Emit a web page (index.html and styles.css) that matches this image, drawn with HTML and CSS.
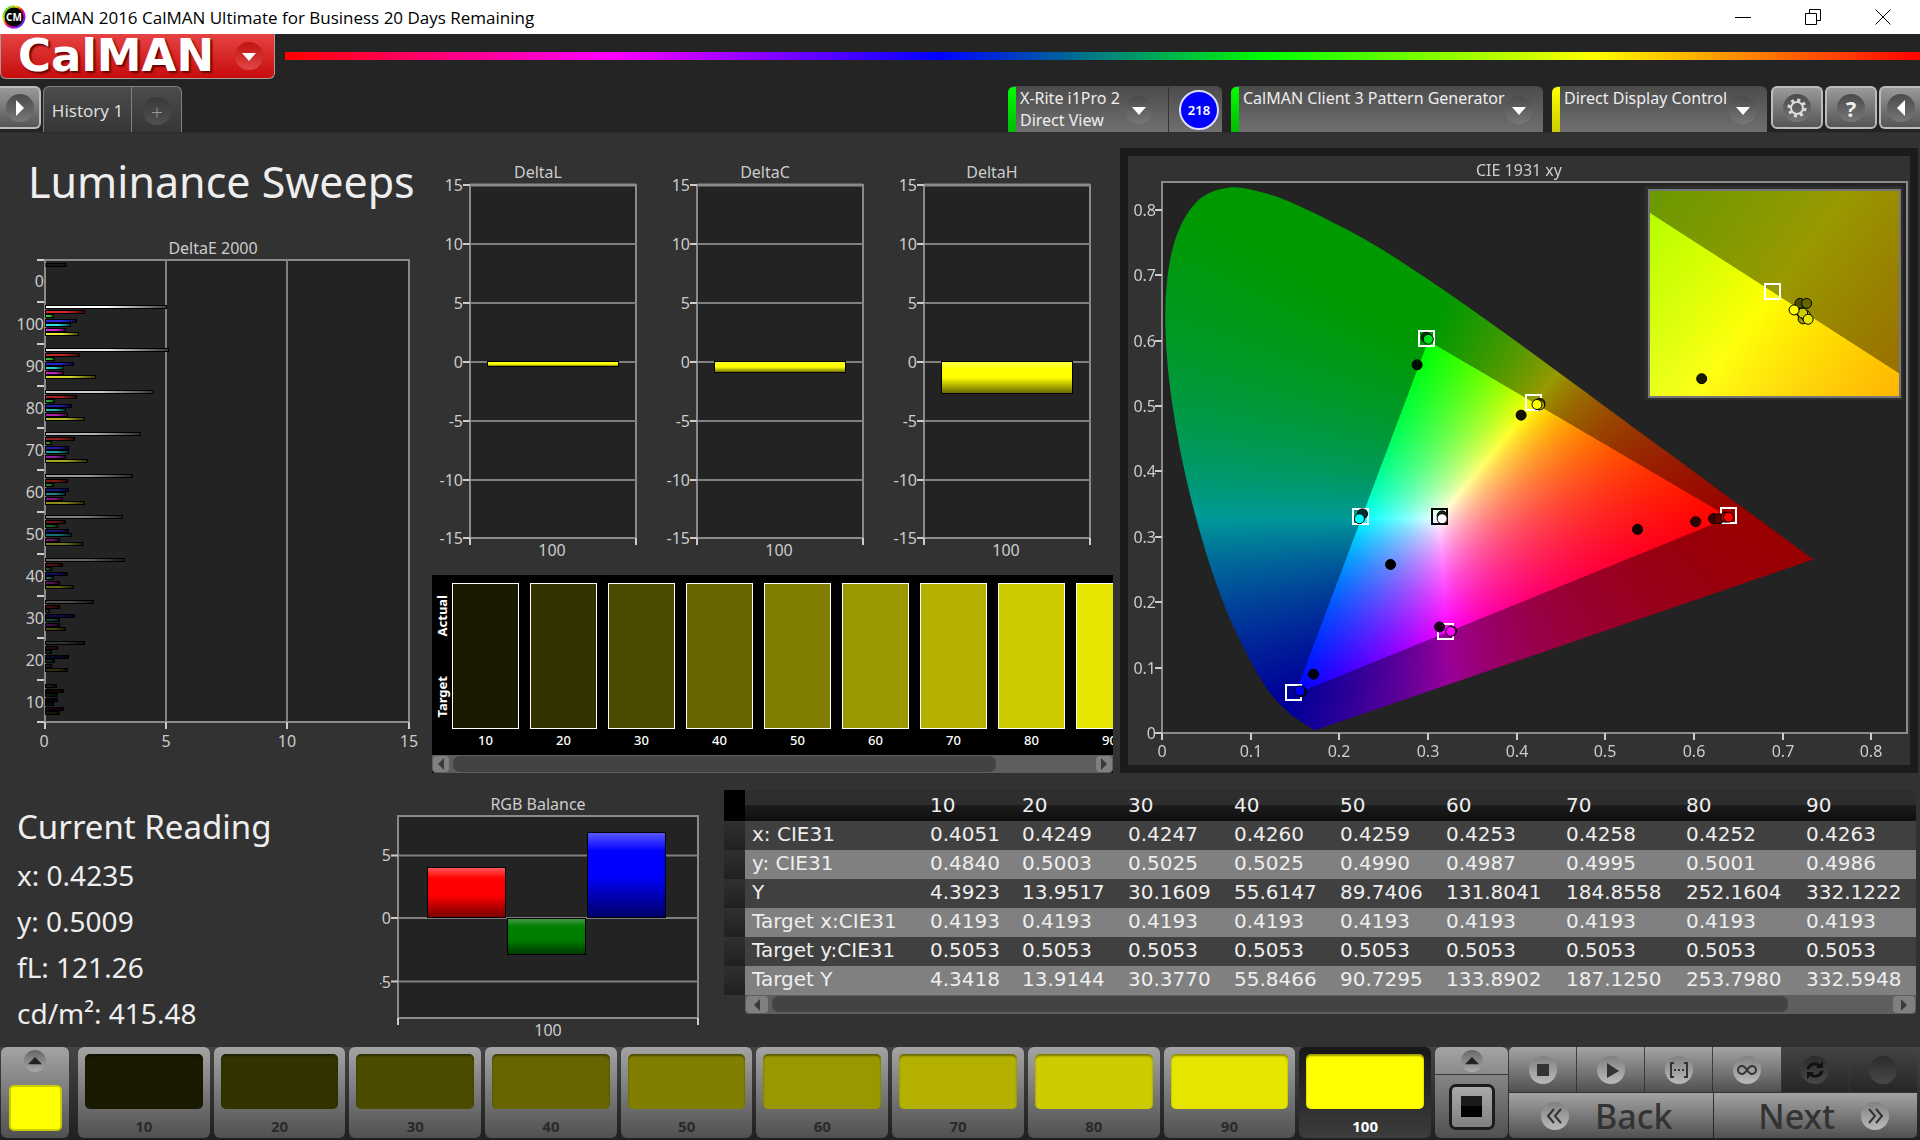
FILE: index.html
```html
<!DOCTYPE html>
<html lang="en">
<head>
<meta charset="utf-8">
<title>CalMAN 2016 CalMAN Ultimate for Business 20 Days Remaining</title>
<link rel="stylesheet" href="styles.css">
</head>
<body>
<div class="titlebar">
  <svg class="app-icon" viewBox="0 0 24 24" aria-hidden="true">
    <defs><linearGradient id="ring" x1="0" y1="0" x2="1" y2="1"><stop offset="0" stop-color="#0c4"/><stop offset=".3" stop-color="#dd0"/><stop offset=".5" stop-color="#e22"/><stop offset=".7" stop-color="#c0e"/><stop offset="1" stop-color="#04f"/></linearGradient></defs>
    <circle cx="12" cy="12" r="10.5" fill="#000" stroke="url(#ring)" stroke-width="2"/>
    <text x="12" y="16" class="app-icon-text">CM</text>
  </svg>
  <span class="window-title">CalMAN 2016 CalMAN Ultimate for Business 20 Days Remaining</span>
  <div class="window-buttons">
    <button type="button" aria-label="Minimize"><svg viewBox="0 0 16 16"><path d="M0 8.5h16"/></svg></button>
    <button type="button" aria-label="Restore"><svg viewBox="0 0 16 16"><path d="M.5 4.500h11v11h-11zM4.500 4.500v-4h11v11h-4"/></svg></button>
    <button type="button" aria-label="Close"><svg viewBox="0 0 16 16"><path d="M.5.5l15 15M15.500.5l-15 15"/></svg></button>
  </div>
</div>

<header class="header">
  <div class="brand-row">
    <button type="button" class="brand"><span>CalMAN</span><span class="knob knob-red"><svg viewBox="0 0 28 28"><path d="M7 11h14l-7 8z" fill="#fff"/></svg></span></button>
    <div class="spectrum"></div>
  </div>
  <div class="tab-row">
    <button type="button" class="side-button side-left" aria-label="Show workflow"><span class="knob"><svg viewBox="0 0 28 28"><path d="M10 6l8 8-8 8z" fill="#fff"/></svg></span></button>
    <div class="tabs">
      <button type="button" class="tab">History 1</button>
      <button type="button" class="tab-add" aria-label="Add history"><span class="knob knob-dark"><svg viewBox="0 0 28 28"><path d="M9 15.500h10M14 10.500v10" stroke="#999" fill="none"/></svg></span></button>
    </div>
    <div class="devices">
      <div class="device meter">
        <button type="button" class="device-main"><i class="status green"></i><span>X-Rite i1Pro 2<br>Direct View</span><span class="knob"><svg viewBox="0 0 28 28"><path d="M7 11h14l-7 8z" fill="#fff"/></svg></span></button>
        <span class="reading-count">218</span>
      </div>
      <button type="button" class="device device-main source"><i class="status green"></i><span>CalMAN Client 3 Pattern Generator</span><span class="knob"><svg viewBox="0 0 28 28"><path d="M7 11h14l-7 8z" fill="#fff"/></svg></span></button>
      <button type="button" class="device device-main display"><i class="status yellow"></i><span>Direct Display Control</span><span class="knob"><svg viewBox="0 0 28 28"><path d="M7 11h14l-7 8z" fill="#fff"/></svg></span></button>
      <div class="tools">
        <button type="button" class="tool" aria-label="Settings"><span class="knob"><svg viewBox="0 0 28 28"><circle cx="14" cy="14" r="6" fill="none" stroke="#ddd" stroke-width="2"/><circle cx="14" cy="14" r="8" fill="none" stroke="#ddd" stroke-width="3" stroke-dasharray="3 3.280"/></svg></span></button>
        <button type="button" class="tool" aria-label="Help"><span class="knob knob-text">?</span></button>
        <button type="button" class="side-button side-right" aria-label="Show panel"><span class="knob"><svg viewBox="0 0 28 28"><path d="M18 6l-8 8 8 8z" fill="#fff"/></svg></span></button>
      </div>
    </div>
  </div>
</header>

<main class="workspace">
  <section class="top">
    <div class="sweep">
      <h1>Luminance Sweeps</h1>
      <svg id="delta-e" class="chart" viewBox="0 230 420 530" role="img" aria-label="DeltaE 2000"></svg>
    </div>

    <div class="middle">
      <div class="deltas">
        <svg class="chart delta" viewBox="0 0 227 442" data-title="DeltaL" data-bottom="233"></svg>
        <svg class="chart delta" viewBox="0 0 227 442" data-title="DeltaC" data-bottom="239"></svg>
        <svg class="chart delta" viewBox="0 0 227 442" data-title="DeltaH" data-bottom="260"></svg>
      </div>
      <div class="compare">
        <div class="compare-body">
          <div class="compare-labels"><span>Actual</span><span>Target</span></div>
          <div class="compare-strip">
            <div class="patch"><i class="patch-10"></i>10</div>
            <div class="patch"><i class="patch-20"></i>20</div>
            <div class="patch"><i class="patch-30"></i>30</div>
            <div class="patch"><i class="patch-40"></i>40</div>
            <div class="patch"><i class="patch-50"></i>50</div>
            <div class="patch"><i class="patch-60"></i>60</div>
            <div class="patch"><i class="patch-70"></i>70</div>
            <div class="patch"><i class="patch-80"></i>80</div>
            <div class="patch"><i class="patch-90"></i>90</div>
          </div>
        </div>
        <div class="scrollbar">
          <button type="button" aria-label="Scroll left"><svg viewBox="0 0 10 14"><path d="M8 1v12L2 7z"/></svg></button>
          <div class="track"><div class="thumb thumb-compare"></div></div>
          <button type="button" aria-label="Scroll right"><svg viewBox="0 0 10 14"><path d="M2 1v12l6-6z"/></svg></button>
        </div>
      </div>
    </div>

    <div class="cie">
      <canvas id="cie-canvas" width="782" height="609"></canvas>
      <svg id="cie-overlay" class="chart" viewBox="1128 156 782 609" role="img" aria-label="CIE 1931 xy"></svg>
    </div>
  </section>

  <section class="bottom">
    <div class="reading">
      <h2>Current Reading</h2>
      <p>x: 0.4235</p>
      <p>y: 0.5009</p>
      <p>fL: 121.26</p>
      <p>cd/m²: 415.48</p>
    </div>

    <svg class="chart" viewBox="380 775 344 268" role="img" aria-label="RGB Balance">
      <defs>
        <linearGradient id="red-bar" x1="0" y1="0" x2="0" y2="1"><stop offset="0" stop-color="#ff5a5a"/><stop offset=".22" stop-color="#f00"/><stop offset=".55" stop-color="#f00"/><stop offset="1" stop-color="#700"/></linearGradient>
        <linearGradient id="green-bar" x1="0" y1="0" x2="0" y2="1"><stop offset="0" stop-color="#4a9a4a"/><stop offset=".22" stop-color="#008000"/><stop offset=".6" stop-color="#007c00"/><stop offset="1" stop-color="#003800"/></linearGradient>
        <linearGradient id="blue-bar" x1="0" y1="0" x2="0" y2="1"><stop offset="0" stop-color="#5a5aff"/><stop offset=".22" stop-color="#00f"/><stop offset=".5" stop-color="#00f"/><stop offset="1" stop-color="#006"/></linearGradient>
      </defs>
      <text x="538" y="810" class="mid">RGB Balance</text>
      <rect x="398" y="816" width="300" height="202" class="plot"/>
      <path class="grid" d="M398 855.500h300M398 918h300M398 981.500h300"/>
      <path class="tick" d="M391 855.500h7M391 918h7M391 981.500h7M398 1018v7M698 1018v7"/>
      <text x="391" y="861" class="end">5</text><text x="391" y="924" class="end">0</text><text x="391" y="988" class="end">-5</text>
      <rect x="427.500" y="867.500" width="78" height="50" fill="url(#red-bar)" stroke="#000"/>
      <rect x="507.500" y="918.500" width="78" height="36" fill="url(#green-bar)" stroke="#000"/>
      <rect x="587.500" y="832.500" width="78" height="85" fill="url(#blue-bar)" stroke="#000"/>
      <text x="548" y="1036" class="mid">100</text>
    </svg>

    <div class="data">
      <table>
        <colgroup><col class="c-mark"><col class="c-name"><col class="c-first"><col class="c-two"><col class="c-two"><col class="c-two"><col class="c-two"><col class="c-three"><col class="c-three"><col class="c-three"><col class="c-last"></colgroup>
        <thead><tr><td class="mark"></td><td></td><th>10</th><th>20</th><th>30</th><th>40</th><th>50</th><th>60</th><th>70</th><th>80</th><th>90</th></tr></thead>
        <tbody>
          <tr><td class="mark"></td><th>x: CIE31</th><td>0.4051</td><td>0.4249</td><td>0.4247</td><td>0.4260</td><td>0.4259</td><td>0.4253</td><td>0.4258</td><td>0.4252</td><td>0.4263</td></tr>
          <tr><td class="mark"></td><th>y: CIE31</th><td>0.4840</td><td>0.5003</td><td>0.5025</td><td>0.5025</td><td>0.4990</td><td>0.4987</td><td>0.4995</td><td>0.5001</td><td>0.4986</td></tr>
          <tr><td class="mark"></td><th>Y</th><td>4.3923</td><td>13.9517</td><td>30.1609</td><td>55.6147</td><td>89.7406</td><td>131.8041</td><td>184.8558</td><td>252.1604</td><td>332.1222</td></tr>
          <tr><td class="mark"></td><th>Target x:CIE31</th><td>0.4193</td><td>0.4193</td><td>0.4193</td><td>0.4193</td><td>0.4193</td><td>0.4193</td><td>0.4193</td><td>0.4193</td><td>0.4193</td></tr>
          <tr><td class="mark"></td><th>Target y:CIE31</th><td>0.5053</td><td>0.5053</td><td>0.5053</td><td>0.5053</td><td>0.5053</td><td>0.5053</td><td>0.5053</td><td>0.5053</td><td>0.5053</td></tr>
          <tr><td class="mark"></td><th>Target Y</th><td>4.3418</td><td>13.9144</td><td>30.3770</td><td>55.8466</td><td>90.7295</td><td>133.8902</td><td>187.1250</td><td>253.7980</td><td>332.5948</td></tr>
        </tbody>
      </table>
      <div class="scrollbar scrollbar-data">
        <button type="button" aria-label="Scroll left"><svg viewBox="0 0 10 14"><path d="M8 1v12L2 7z"/></svg></button>
        <div class="track"><div class="thumb thumb-data"></div></div>
        <button type="button" aria-label="Scroll right"><svg viewBox="0 0 10 14"><path d="M2 1v12l6-6z"/></svg></button>
      </div>
    </div>
  </section>
</main>

<footer class="footer">
  <button type="button" class="current-patch" aria-label="Current pattern"><span class="knob knob-small"><svg viewBox="0 0 28 28"><path d="M5 18h18l-9-9z" fill="#222"/></svg></span><i class="patch-100"></i></button>
  <div class="levels">
    <button type="button" class="level"><i class="patch-10"></i>10</button>
    <button type="button" class="level"><i class="patch-20"></i>20</button>
    <button type="button" class="level"><i class="patch-30"></i>30</button>
    <button type="button" class="level"><i class="patch-40"></i>40</button>
    <button type="button" class="level"><i class="patch-50"></i>50</button>
    <button type="button" class="level"><i class="patch-60"></i>60</button>
    <button type="button" class="level"><i class="patch-70"></i>70</button>
    <button type="button" class="level"><i class="patch-80"></i>80</button>
    <button type="button" class="level"><i class="patch-90"></i>90</button>
    <button type="button" class="level selected"><i class="patch-100"></i>100</button>
  </div>
  <div class="window-size">
    <button type="button" aria-label="Pattern options"><span class="knob knob-small"><svg viewBox="0 0 28 28"><path d="M5 18h18l-9-9z" fill="#222"/></svg></span></button>
    <button type="button" class="window-pattern" aria-label="Window pattern"><span><i></i></span></button>
  </div>
  <div class="controls">
    <div class="transport">
      <button type="button" aria-label="Stop"><span class="knob knob-light"><svg viewBox="0 0 28 28"><path d="M8 8h12v12H8z" fill="#333"/></svg></span></button>
      <button type="button" aria-label="Read single"><span class="knob knob-light"><svg viewBox="0 0 28 28"><path d="M10 7l12 8-12 7z" fill="#333"/></svg></span></button>
      <button type="button" aria-label="Read series"><span class="knob knob-light"><svg viewBox="0 0 28 28"><path d="M9 7H6v14h3M19 7h3v14h-3M9 14h2M13 14h2M17 14h2" fill="none" stroke="#333" stroke-width="2"/></svg></span></button>
      <button type="button" aria-label="Read continuous"><span class="knob knob-light"><svg viewBox="0 0 28 28"><path d="M14 14c-2-3-3-4-5-4a4 4 0 0 0 0 8c2 0 3-1 5-4s3-4 5-4a4 4 0 0 1 0 8c-2 0-3-1-5-4z" fill="none" stroke="#333" stroke-width="2"/></svg></span></button>
      <button type="button" class="off" aria-label="Auto advance"><span class="knob knob-off"><svg viewBox="0 0 28 28"><path d="M7 13c1-5 8-7 12-3M21 15c-1 5-8 7-12 3" fill="none" stroke="#111" stroke-width="3"/><path d="M15 12h7V5zM13 16H6v7z" fill="#111"/></svg></span></button>
      <button type="button" class="off" aria-label="Record"><span class="knob knob-off"></span></button>
    </div>
    <div class="pager">
      <button type="button" class="back"><span class="knob knob-light"><svg viewBox="0 0 28 28"><path d="M13 7l-6 7 6 7M20 7l-6 7 6 7" fill="none" stroke="#333" stroke-width="2"/></svg></span>Back</button>
      <button type="button" class="next">Next<span class="knob knob-light"><svg viewBox="0 0 28 28"><path d="M8 7l6 7-6 7M15 7l6 7-6 7" fill="none" stroke="#333" stroke-width="2"/></svg></span></button>
    </div>
  </div>
</footer>
<script src="charts.js"></script>
</body>
</html>
```
FILE: styles.css
```css
* { box-sizing: border-box; }

body {
  margin: 0;
  min-height: 100vh;
  display: flex;
  flex-direction: column;
  background: #242424;
  color: #eee;
  font-family: "Noto Sans", "Open Sans", sans-serif;
  font-size: 16px;
  overflow-x: hidden;
}

button {
  border: 0;
  padding: 0;
  background: none;
  color: inherit;
  font: inherit;
  display: flex;
  align-items: center;
  justify-content: center;
}

svg { display: block; }
h1, h2, p { margin: 0; font-weight: 400; }

/* Window title bar */
.titlebar {
  height: 34px;
  background: #fff;
  color: #000;
  display: flex;
  align-items: center;
  padding-left: 2px;
}
.app-icon { width: 24px; height: 24px; }
.app-icon-text { font-size: 10px; font-weight: 700; fill: #fff; text-anchor: middle; }
.window-title { flex: 1; padding-left: 5px; font-family: "Open Sans", sans-serif; font-size: 17px; }
.window-buttons { display: flex; padding-right: 2px; }
.window-buttons button { width: 70px; height: 34px; }
.window-buttons svg { width: 16px; height: 16px; fill: none; stroke: #000; }

/* Header */
.header { background: #242424; }
.brand-row { display: flex; gap: 10px; height: 52px; }
.brand {
  width: 275px;
  height: 45px;
  padding: 0 11px 0 17px;
  justify-content: space-between;
  border: 1px solid #a99;
  border-top: 0;
  border-radius: 0 0 6px 6px;
  background: linear-gradient(#e64343, #c80c0c);
  color: #fff;
  font-family: "DejaVu Sans", sans-serif;
  font-weight: 700;
  font-size: 45px;
  line-height: 44px;
  text-shadow: 2px 2px 2px #600;
}
.spectrum {
  flex: 1;
  height: 8px;
  margin-top: 18px;
  background: linear-gradient(90deg, #f00, #f0f, #00f, #0f0, #ff0, #f00);
}

.knob {
  flex: none;
  width: 28px;
  height: 28px;
  border-radius: 50%;
  background: linear-gradient(#4a4a4a, #777);
}
.knob-red { background: linear-gradient(#c01010, #e04848); }
.knob-dark { background: linear-gradient(#383838, #505050); }
.knob-small { width: 22px; height: 22px; background: linear-gradient(#666, #aaa); }
.knob-light { background: linear-gradient(#808080, #bbb); }
.knob-off { background: linear-gradient(#2c2c2c, #484848); }
.knob-text { color: #eee; font-weight: 700; font-size: 22px; line-height: 28px; text-align: center; }

.tab-row { display: flex; height: 46px; align-items: flex-start; }
.side-button, .tool {
  width: 52px;
  height: 43px;
  border: 2px solid #bbb;
  border-radius: 6px;
  background: linear-gradient(#9a9a9a, #555);
}
.side-left { width: 41px; border-left: 0; border-radius: 0 6px 6px 0; }
.side-right { width: 41px; border-right: 0; border-radius: 6px 0 0 6px; }
.tabs {
  display: flex;
  height: 46px;
  margin-left: 2px;
  border: 1px solid #808080;
  border-bottom: 0;
  border-radius: 6px 6px 0 0;
  background: linear-gradient(#4c4c4c, #363636);
}
.tab { width: 88px; border-right: 1px solid #808080; color: #ddd; font-size: 17px; padding-top: 2px; }
.tab-add { width: 49px; padding-top: 3px; }

.devices { display: flex; margin-left: auto; gap: 9px; }
.device {
  height: 46px;
  border-top: 1px solid #4a4a4a;
  border-radius: 6px 6px 0 0;
  background: linear-gradient(#4c4c4c, #707070);
  overflow: hidden;
}
.meter { display: flex; width: 214px; align-items: center; }
.device-main {
  justify-content: flex-start;
  align-items: stretch;
  text-align: left;
  font-size: 16px;
  line-height: 22px;
}
.device-main > span:nth-child(2) { flex: 1; white-space: nowrap; padding-left: 4px; }
.device-main .knob { align-self: center; margin-right: 10px; }
.meter .device-main { width: 161px; height: 45px; border-right: 1px solid #333; }
.meter .device-main .knob { margin-right: 15px; }
.status { width: 8px; flex: none; border-radius: 5px 0 0 0; }
.green { background: linear-gradient(#0f0, #0b0); }
.yellow { background: linear-gradient(#ff0, #cc0); }
.source { width: 312px; }
.display { width: 215px; }
.reading-count {
  width: 40px;
  height: 40px;
  margin-left: 10px;
  border: 2px solid #ddf;
  border-radius: 50%;
  background: #00f;
  color: #fff;
  font-size: 13px;
  line-height: 36px;
  font-weight: 600;
  text-align: center;
}
.tools { display: flex; gap: 2px; margin-left: -5px; }

/* Workspace */
.workspace { flex: 1; background: #323232; border-top: 1px solid #2c2c2c; }
.top { display: grid; grid-template-columns: minmax(0, 420fr) minmax(0, 700fr) minmax(0, 800fr); }
.bottom { display: grid; grid-template-columns: minmax(0, 380fr) minmax(0, 344fr) minmax(0, 1192fr) 4px; align-items: start; }

h1 { padding: 20px 0 19px 28px; font-size: 43px; line-height: 58px; white-space: nowrap; }

.chart { width: 100%; height: auto; font-size: 16px; }
.chart text { fill: #ccc; }
.chart .mid { text-anchor: middle; }
.chart .end { text-anchor: end; }
.plot { fill: #232323; stroke: #8a8a8a; stroke-width: 2; }
.frame { fill: none; stroke: #8a8a8a; stroke-width: 2; }
.grid { fill: none; stroke: #808080; stroke-width: 2; }
.tick { fill: none; stroke: #ccc; stroke-width: 2; }
.top-line { fill: none; stroke: #8a8a8a; stroke-width: 3; }
.target { fill: none; stroke: #fff; stroke-width: 2; }
.target-dark { stroke: #000; }
.point { stroke: #000; stroke-width: 1; }
.inset-frame { fill: none; stroke: #777; stroke-width: 2; }

.deltas { display: grid; grid-template-columns: repeat(3, minmax(0, 227fr)) minmax(0, 19fr); }

.compare { margin: 0 7px 0 12px; background: #000; overflow: hidden; }
.compare-body { display: flex; height: 180px; }
.compare-labels {
  width: 20px;
  flex: none;
  display: flex;
  flex-direction: column;
  justify-content: space-around;
  align-items: center;
  padding-bottom: 18px;
  font-size: 13px;
  line-height: 20px;
  font-weight: 700;
}
.compare-labels span { writing-mode: vertical-rl; transform: rotate(180deg); color: #fff; }
.compare-strip { flex: 1; min-width: 0; display: flex; gap: 11px; padding-top: 8px; overflow: hidden; }
.patch { width: 67px; flex: none; text-align: center; font-size: 13px; line-height: 22px; font-weight: 500; color: #fff; }
.patch i { display: block; height: 146px; border: 1px solid #fff; }

.patch-10 { background: #1a1a00; }
.patch-20 { background: #333300; }
.patch-30 { background: #4c4b00; }
.patch-40 { background: #666500; }
.patch-50 { background: #807f00; }
.patch-60 { background: #999800; }
.patch-70 { background: #b3b000; }
.patch-80 { background: #cdca00; }
.patch-90 { background: #e6e500; }
.patch-100 { background: #ffff00; }

.scrollbar { display: flex; height: 18px; padding: 1px; background: #5e5e5e; border-radius: 0 0 4px 4px; }
.scrollbar button { width: 16px; background: #808080; border-radius: 4px; }
.scrollbar svg { width: 10px; height: 14px; fill: #3a3a3a; }
.track { flex: 1; padding: 0 4px; }
.thumb { height: 16px; border-radius: 7px; background: #434343; }
.thumb-compare { width: 85%; }
.thumb-data { width: 91%; }
.scrollbar-data { margin-left: 21px; height: 19px; }
.scrollbar-data button { width: 22px; }

.cie {
  position: relative;
  align-self: start;
  margin: 15px 2px 2px 0;
  border: 8px solid #1b1b1b;
  background: #323232;
}
.cie canvas { display: block; width: 100%; height: auto; }
.cie .chart { position: absolute; inset: 0; }

/* Current reading */
.reading { padding: 30px 0 0 17px; }
.reading h2 { font-size: 33px; line-height: 44px; }
.reading p { font-size: 28px; line-height: 46px; }
.reading h2 + p { padding-top: 3px; }

/* Data table */
.data { margin-top: 15px; overflow: hidden; }
table {
  width: 100%;
  table-layout: fixed;
  border-collapse: collapse;
  font-family: "DejaVu Sans", sans-serif;
  font-size: 20px;
  line-height: 27px;
  white-space: nowrap;
}
.c-mark { width: 21px; }
.c-name { width: 178px; }
.c-first { width: 92px; }
.c-two { width: 106px; }
.c-three { width: 120px; }
th, td { height: 29px; padding: 0 0 2px 7px; text-align: left; font-weight: 400; }
thead th, thead td { height: 31px; padding-top: 2px; }
thead tr { background: linear-gradient(#2e2e2e 0 50%, #1c1c1c 50%, #0e0e0e); }
thead .mark { background: #000; }
tbody tr { background: #404040; }
tbody tr:nth-child(even) { background: #808080; }
tbody .mark { background: linear-gradient(#303030, #202020); }

/* Footer */
.footer { display: flex; height: 93px; padding: 0 3px 2px 1px; background: linear-gradient(#444, #202020); }
.footer button { background: linear-gradient(#a4a4a4, #505050); }
.footer .current-patch { width: 68px; border-radius: 6px; flex-direction: column; justify-content: flex-start; gap: 13px; padding-top: 3px; margin-right: 9px; }
.current-patch i { width: 53px; height: 46px; border-radius: 5px; border: 2px solid #cc0; }
.levels { flex: 1; display: grid; grid-template-columns: repeat(10, 1fr); gap: 4px; }
.footer .level {
  flex-direction: column;
  justify-content: flex-start;
  gap: 6px;
  padding: 7px 7px 0;
  border-radius: 6px;
  color: #2a2a2a;
  font-size: 15px;
  line-height: 22px;
  font-weight: 700;
}
.level i { width: 100%; height: 55px; border-radius: 5px; box-shadow: inset 0 2px 2px #0006; }
.footer .selected { background: linear-gradient(#181818, #3c3c3c); color: #fff; }
.window-size { width: 73px; margin: 0 1px 0 4px; display: flex; flex-direction: column; gap: 1px; }
.footer .window-size button:first-child { height: 27px; border-radius: 6px 6px 0 0; background: linear-gradient(#a4a4a4, #8a8a8a); }
.footer .window-pattern { flex: 1; border-radius: 0 0 6px 6px; background: linear-gradient(#858585, #505050); }
.window-pattern span { width: 46px; height: 46px; border: 3px solid #1c1c1c; border-radius: 7px; background: linear-gradient(#aaa, #808080); display: flex; align-items: center; justify-content: center; }
.window-pattern i { width: 21px; height: 21px; background: linear-gradient(#1a1a1a 50%, #000 50%); }
.controls { width: 408px; display: flex; flex-direction: column; gap: 1px; }
.transport { flex: 1; display: grid; grid-template-columns: repeat(6, 1fr); gap: 1px; border-radius: 5px 5px 0 0; overflow: hidden; }
.footer .off { background: linear-gradient(#444, #262626); }
.pager { flex: 1; display: grid; grid-template-columns: 1fr 1fr; gap: 1px; border-radius: 0 0 5px 5px; overflow: hidden; }
.pager button { gap: 26px; color: #333; font-size: 34px; line-height: 44px; font-weight: 500; }
.pager .back { justify-content: flex-start; padding-left: 32px; }
.pager .next { justify-content: flex-end; padding-right: 28px; }
```
FILE: charts.js
```js
const NS = 'http://www.w3.org/2000/svg';
function add(parent, name, attrs, text) {
  const el = document.createElementNS(NS, name);
  for (const key in attrs) el.setAttribute(key, attrs[key]);
  if (text !== undefined) el.textContent = text;
  parent.appendChild(el);
  return el;
}

/* DeltaE 2000: one group of seven bars per level, bar lengths in chart units */
(function () {
  const svg = document.getElementById('delta-e');
  const groups = [
    [100, 305, [121, 39, 8, 31, 25, 20, 33]],
    [90, 348, [123, 34, 9, 28, 18, 18, 50]],
    [80, 390, [108, 31, 9, 26, 20, 22, 39]],
    [70, 432, [95, 29, 6, 23, 23, 20, 42]],
    [60, 474, [87, 22, 8, 23, 20, 17, 39]],
    [50, 515, [77, 20, 12, 23, 26, 14, 37]],
    [40, 558, [79, 17, 6, 22, 8, 14, 28]],
    [30, 600, [48, 14, 4, 29, 14, 14, 20]],
    [20, 641, [39, 12, 6, 23, 9, 6, 22]],
    [10, 684, [11, 18, 12, 12, 8, 18, 14]]
  ];
  const hues = [[255, 255, 255], [215, 40, 40], [60, 200, 60], [40, 40, 225], [40, 225, 225], [215, 40, 215], [235, 235, 50]];
  add(svg, 'text', { x: 213, y: 254, class: 'mid' }, 'DeltaE 2000');
  add(svg, 'rect', { x: 45, y: 260, width: 364, height: 462, class: 'plot' });
  add(svg, 'path', { d: 'M166 260v462M287 260v462', class: 'grid' });
  let d = '';
  for (let i = 0; i < 12; i++) d += 'M37 ' + (260 + i * 42) + 'h7';
  add(svg, 'path', { d: d + 'M45 722v7M166 722v7M287 722v7M409 722v7', class: 'tick' });
  [[44, 0], [166, 5], [287, 10], [409, 15]].forEach(t => add(svg, 'text', { x: t[0], y: 747, class: 'mid' }, t[1]));
  add(svg, 'text', { x: 44, y: 287, class: 'end' }, '0');
  add(svg, 'rect', { x: 46, y: 263.5, width: 20, height: 3, fill: '#151515', stroke: '#000' });
  const defs = add(svg, 'defs', {});
  groups.forEach((g, n) => {
    add(svg, 'text', { x: 44, y: 330 + n * 42, class: 'end' }, g[0]);
    g[2].forEach((w, i) => {
      const c = hues[i].map(v => Math.round(v * g[0] / 100));
      const id = 'b' + n + '-' + i;
      const grad = add(defs, 'linearGradient', { id: id });
      add(grad, 'stop', { offset: 0, 'stop-color': 'rgb(' + c + ')' });
      add(grad, 'stop', { offset: 0.5, 'stop-color': 'rgb(' + c + ')' });
      add(grad, 'stop', { offset: 1, 'stop-color': 'rgb(' + c.map(v => v >> 2) + ')' });
      add(svg, 'rect', { x: 45.5, y: g[1] + Math.round(i * 4.5) + 0.5, width: w, height: 3, fill: 'url(#' + id + ')', stroke: '#000' });
    });
  });
})();

/* DeltaL, DeltaC and DeltaH */
document.querySelectorAll('.delta').forEach((svg, n) => {
  add(svg, 'text', { x: 118, y: 45, class: 'mid' }, svg.dataset.title);
  add(svg, 'rect', { x: 50, y: 52, width: 166, height: 353, class: 'plot' });
  add(svg, 'path', { d: 'M50 52h166', class: 'top-line' });
  const ys = [52, 111, 170, 229, 288, 347, 405];
  add(svg, 'path', { d: ys.slice(1, 6).map(y => 'M50 ' + y + 'h166').join(''), class: 'grid' });
  add(svg, 'path', { d: ys.map(y => 'M43 ' + y + 'h7').join('') + 'M50 405v7M216 405v7', class: 'tick' });
  ys.forEach((y, i) => add(svg, 'text', { x: 43, y: y + 6, class: 'end' }, 15 - i * 5));
  const grad = add(add(svg, 'defs', {}), 'linearGradient', { id: 'yellow-' + n, x1: 0, y1: 0, x2: 0, y2: 1 });
  [[0, '#ffff50'], [0.25, '#ff0'], [0.5, '#ff0'], [1, '#660']].forEach(s => add(grad, 'stop', { offset: s[0], 'stop-color': s[1] }));
  add(svg, 'rect', { x: 67.5, y: 228.5, width: 131, height: svg.dataset.bottom - 228, fill: 'url(#yellow-' + n + ')', stroke: '#000' });
  add(svg, 'text', { x: 132, y: 423, class: 'mid' }, '100');
});

/* CIE 1931 chromaticity diagram */
(function () {
  const OX = 1128, OY = 156;
  const main = { x: v => 1162 + v * 886.5, y: v => 733 - v * 654, ix: p => (p - 1162) / 886.5, iy: p => (733 - p) / 654 };
  const zoom = {
    x: v => 1773 + (v - 0.4193) * 5021, y: v => 292 - (v - 0.5053) * 4070,
    ix: p => 0.4193 + (p - 1773) / 5021, iy: p => 0.5053 + (292 - p) / 4070
  };
  const locus = [[.1741, .005], [.1714, .0051], [.1644, .0109], [.1566, .0177], [.144, .0297], [.1241, .0578], [.1096, .0868], [.0913, .1327], [.0687, .2007], [.0454, .295], [.0235, .4127], [.0082, .5384], [.0039, .6548], [.0139, .7502], [.0389, .812], [.0743, .8338], [.1142, .8262], [.1547, .8059], [.2296, .7543], [.3016, .6923], [.3731, .6245], [.4441, .5547], [.5125, .4866], [.5752, .4242], [.627, .3725], [.6658, .334], [.6915, .3083], [.719, .2809], [.7347, .2653]];

  function colour(x, y) {
    const X = x / y, Z = (1 - x - y) / y;
    const rgb = [3.2406 * X - 1.5372 - 0.4986 * Z, -0.9689 * X + 1.8758 + 0.0415 * Z, 0.0557 * X - 0.204 + 1.057 * Z];
    const k = Math.min(...rgb) < 0 ? 0.6 : 1;
    const top = Math.max(...rgb);
    return rgb.map(v => 255 * k * Math.max(v, 0) / top);
  }
  function raster(map, x, y, w, h) {
    const c = document.createElement('canvas');
    c.width = w * 2; c.height = h * 2;
    const g = c.getContext('2d'), img = g.createImageData(w * 2, h * 2);
    for (let j = 0, p = 0; j < h * 2; j++) for (let i = 0; i < w * 2; i++, p += 4) {
      const rgb = colour(map.ix(x + i / 2), Math.max(map.iy(y + j / 2), 0.0005));
      img.data[p] = rgb[0]; img.data[p + 1] = rgb[1]; img.data[p + 2] = rgb[2]; img.data[p + 3] = 255;
    }
    g.putImageData(img, 0, 0);
    return c;
  }
  const ctx = document.getElementById('cie-canvas').getContext('2d');
  ctx.translate(-OX, -OY);
  ctx.fillStyle = '#232323';
  ctx.fillRect(1162, 182, 745, 551);
  ctx.save();
  ctx.beginPath();
  const pts = locus.map(p => [main.x(p[0]), main.y(p[1])]);
  ctx.moveTo(...pts[0]);
  for (let i = 0; i < pts.length - 1; i++) {
    const a = pts[i - 1] || pts[i], b = pts[i], c = pts[i + 1], d = pts[i + 2] || c;
    ctx.bezierCurveTo(b[0] + (c[0] - a[0]) / 6, b[1] + (c[1] - a[1]) / 6, c[0] - (d[0] - b[0]) / 6, c[1] - (d[1] - b[1]) / 6, c[0], c[1]);
  }
  ctx.closePath();
  ctx.clip();
  ctx.drawImage(raster(main, 1162, 182, 660, 551), 1162, 182, 660, 551);
  ctx.restore();
  ctx.fillStyle = '#2e2e2e';
  ctx.fillRect(1645, 186, 258, 214);
  ctx.drawImage(raster(zoom, 1649, 190, 250, 206), 1649, 190, 250, 206);

  const svg = document.getElementById('cie-overlay');
  add(svg, 'text', { x: 1519, y: 176, class: 'mid' }, 'CIE 1931 xy');
  add(svg, 'rect', { x: 1162, y: 182, width: 745, height: 551, class: 'frame' });
  let ticks = '';
  for (let i = 0; i <= 8; i++) {
    const x = Math.round(main.x(i / 10)), y = Math.round(main.y(i / 10));
    ticks += 'M' + x + ' 733v7M1155 ' + y + 'h7';
    add(svg, 'text', { x: x, y: 757, class: 'mid' }, i ? '0.' + i : '0');
    add(svg, 'text', { x: 1156, y: y + 6, class: 'end' }, i ? '0.' + i : '0');
  }
  add(svg, 'path', { d: ticks, class: 'tick' });
  add(svg, 'rect', { x: 1649, y: 190, width: 251, height: 207, class: 'inset-frame' });

  function target(map, x, y, dark) {
    add(svg, 'rect', { x: Math.round(map.x(x)) - 8, y: Math.round(map.y(y)) - 8, width: 15, height: 15, class: 'target' + (dark ? ' target-dark' : '') });
  }
  function point(map, x, y, fill) {
    add(svg, 'circle', { cx: map.x(x), cy: map.y(y), r: 5, fill: fill, class: 'point' });
  }
  [[.299, .602], [.4193, .5053], [.64, .332], [.2245, .33], [.32, .1548], [.1485, .0618]].forEach(t => target(main, t[0], t[1]));
  target(main, .3131, .33, true);
  [[.2878, .563, '#001000'], [.298, .605, '#004000'], [.3004, .602, '#00e020'],
   [.4051, .486, '#111100'], [.4263, .504, '#505000'], [.426, .5015, '#b0b000'], [.423, .5023, '#ffff00'],
   [.5364, .3114, '#180000'], [.602, .3232, '#300000'], [.6222, .3276, '#400000'], [.6285, .3276, '#600000'], [.6354, .33, '#a00000'], [.639, .33, '#ff0000'],
   [.2578, .2577, '#000'], [.316, .332, '#222'], [.316, .3276, '#fff'],
   [.2262, .335, '#003030'], [.2227, .3276, '#00ffff'],
   [.3131, .1622, '#200020'], [.3269, .156, '#700070'], [.3257, .1554, '#ff00ff'],
   [.1709, .09, '#000010'], [.1577, .063, '#000060'], [.1554, .0643, '#0000ff']
  ].forEach(p => point(main, p[0], p[1], p[2]));

  target(zoom, .4193, .5053);
  [[.4051, .484], [.4249, .5003], [.4247, .5025], [.426, .5025], [.4259, .499], [.4253, .4987], [.4258, .4995], [.4252, .5001], [.4263, .4986], [.4235, .5009]]
    .forEach((p, i) => { const v = Math.round(25.5 * (i + 1)); point(zoom, p[0], p[1], 'rgb(' + v + ',' + v + ',0)'); });
})();
```
